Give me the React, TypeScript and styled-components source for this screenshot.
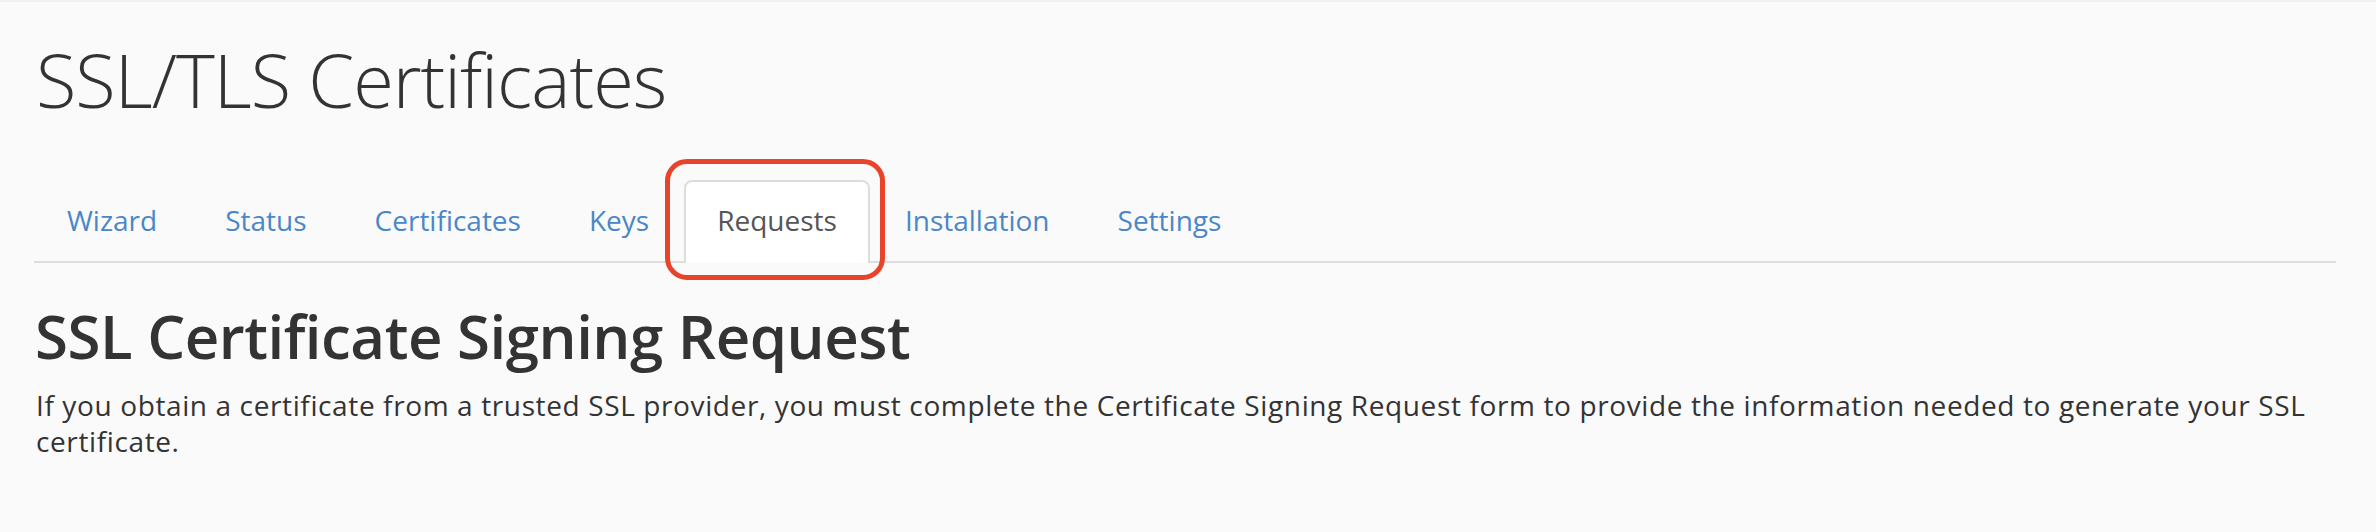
import React from "react";
import styled, { createGlobalStyle } from "styled-components";

const GlobalStyle = createGlobalStyle`
  html, body {
    margin: 0;
    padding: 0;
    background: #fafafa;
  }
  body {
    font-family: "Open Sans", "Liberation Sans", sans-serif;
    color: #333;
  }
`;

const Page = styled.div`
  padding: 0 40px 0 34px;
  border-top: 2px solid #f0f0f0;
`;

const Title = styled.h1`
  margin: 37px 0 0 2px;
  font-size: 74px;
  font-weight: 300;
  line-height: 82px;
  letter-spacing: -1px;
  color: #333;
`;

const Nav = styled.ul`
  display: flex;
  list-style: none;
  margin: 59px 0 0;
  padding: 0;
  border-bottom: 2px solid #dddddd;
`;

const Tab = styled.li<{ $active?: boolean }>`
  position: relative;
  margin: 0 2px ${(p) => (p.$active ? "-2px" : "0")} 0;
  padding: 18px 31px ${(p) => (p.$active ? "22px" : "20px")};
  border: 2px solid ${(p) => (p.$active ? "#dddddd" : "transparent")};
  border-bottom: none;
  border-radius: 8px 8px 0 0;
  background: ${(p) => (p.$active ? "#ffffff" : "transparent")};
  font-size: 28px;
  line-height: 41px;
  color: ${(p) => (p.$active ? "#555555" : "#4a87c8")};
  cursor: pointer;
`;

const Highlight = styled.span`
  position: absolute;
  left: -21px;
  right: -17px;
  top: -23px;
  bottom: -17px;
  border: 5px solid #e8432b;
  border-radius: 22px;
  pointer-events: none;
`;

const Heading = styled.h2`
  margin: 40px 0 0 1px;
  font-size: 60px;
  font-weight: 600;
  line-height: 66px;
  letter-spacing: -0.5px;
  color: #333;
`;

const Intro = styled.p`
  margin: 18px 0 0 2px;
  font-size: 28px;
  line-height: 36px;
  letter-spacing: 0.62px;
  color: #333;
`;

const tabs = [
  "Wizard",
  "Status",
  "Certificates",
  "Keys",
  "Requests",
  "Installation",
  "Settings",
];

export default function App() {
  return (
    <>
      <GlobalStyle />
      <Page>
        <Title>SSL/TLS Certificates</Title>
        <Nav>
          {tabs.map((t) => (
            <Tab key={t} $active={t === "Requests"}>
              {t}
              {t === "Requests" && <Highlight />}
            </Tab>
          ))}
        </Nav>
        <Heading>SSL Certificate Signing Request</Heading>
        <Intro>
          If you obtain a certificate from a trusted SSL provider, you must
          complete the Certificate Signing Request form to provide the
          information needed to generate your SSL certificate.
        </Intro>
      </Page>
    </>
  );
}
